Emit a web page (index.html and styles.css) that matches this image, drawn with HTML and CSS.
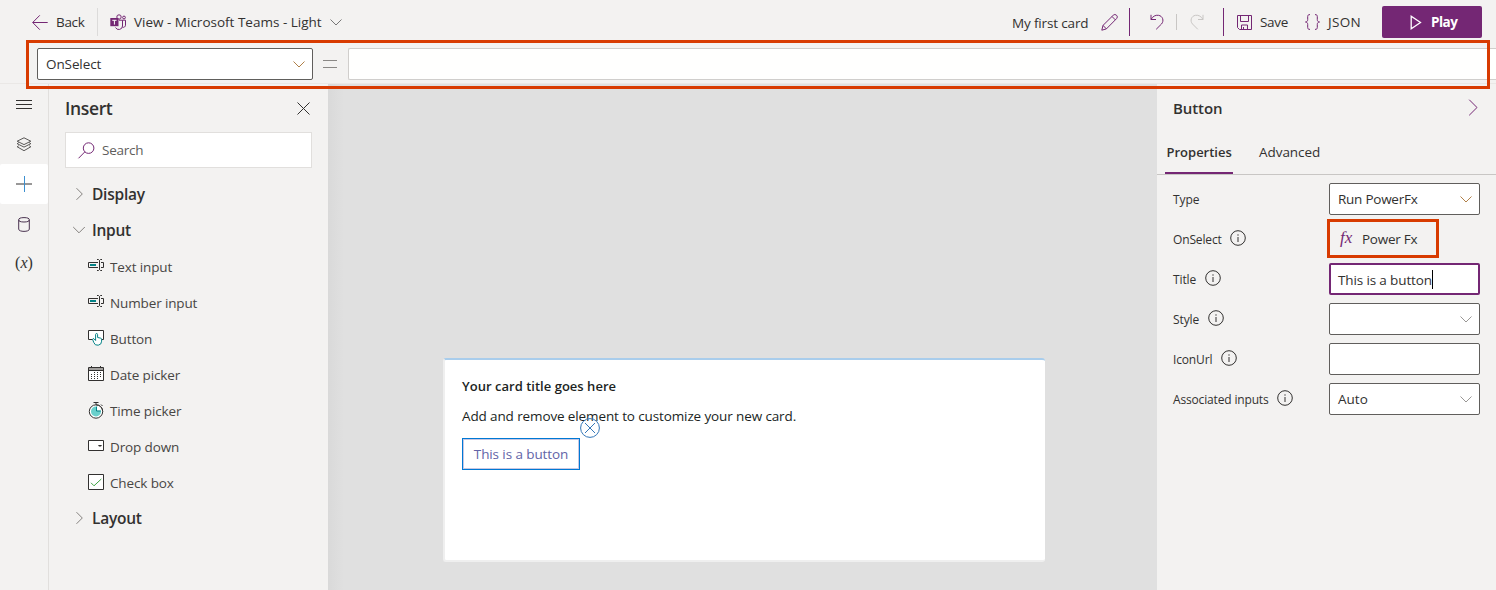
FILE: index.html
```html
<!DOCTYPE html>
<html lang="en">
<head>
<meta charset="utf-8">
<title>Card designer</title>
<link rel="stylesheet" href="styles.css">
</head>
<body>
<div class="app">
  <header class="commands">
    <svg class="i-back" width="16" height="16" viewBox="0 0 16 16"><path d="M15.700 8.500H.8M7.800 1.300.7 8.500l7.100 7.200"/></svg>
    <span class="t-back">Back</span>
    <i class="sep sep-light"></i>
    <svg class="i-teams" width="17" height="17" viewBox="0 0 17 17"><circle cx="9" cy="3" r="2.200"/><circle cx="14" cy="3.500" r="1.400"/><path d="M9 6.200h3.500v5.800a3.700 3.700 0 0 1-7 1.500M12.500 6.200h3v5a2.200 2.200 0 0 1-3 2"/><path class="solid" d="M.3 4h8.200v8.200H.3z"/><path class="letter" d="M2.300 6.300h4.200M4.400 6.300v4.300"/></svg>
    <span class="t-view">View - Microsoft Teams - Light</span>
    <svg class="chev i-view" width="12" height="7" viewBox="0 0 12 7"><path d="M.5.5 6 6 11.500.5"/></svg>
    <span class="t-card">My first card</span>
    <svg class="i-pencil" width="17" height="17" viewBox="0 0 17 17"><path d="M.8 16.200 2 11.400 12.200 1.300a2.200 2.200 0 0 1 3.400 3.300L5.400 14.900zM11 2.500l3.400 3.400M2 11.400l3.400 3.500"/></svg>
    <i class="sep sep-dark s1"></i>
    <svg class="i-undo" width="14" height="16" viewBox="0 0 14 16"><path d="M1 .8v4.700h5M1 5.500C2.500 2.500 5.500.8 8.500 1.300c4.300.7 5.800 5.500 3 8.700L6.200 15.300"/></svg>
    <i class="sep sep-short"></i>
    <svg class="i-redo" width="14" height="16" viewBox="0 0 14 16"><path d="M13 .8v4.700H8M13 5.500C11.500 2.500 8.500.8 5.500 1.300c-4.300.7-5.800 5.500-3 8.700l5.300 5.300"/></svg>
    <i class="sep sep-dark s2"></i>
    <svg class="i-save" width="15" height="15" viewBox="0 0 15 15"><path d="M.5.5h14v14H2.500l-2-2zM3.500.5v6h8v-6M4.500 14.500v-4.500h6v4.500M6.500 12v2.500"/></svg>
    <span class="t-save">Save</span>
    <svg class="i-json" width="15" height="16" viewBox="0 0 15 16"><path d="M5 .6C3 .6 2.700 1.400 2.700 2.600v3C2.700 7 2 7.900.5 8c1.500.1 2.200 1 2.200 2.400v3c0 1.200.3 2 2.300 2M10 .6c2 0 2.300.8 2.300 2v3c0 1.400.7 2.300 2.200 2.400-1.500.1-2.200 1-2.200 2.400v3c0 1.200-.3 2-2.300 2"/></svg>
    <span class="t-json">JSON</span>
    <button class="play"><svg width="12" height="15" viewBox="0 0 12 15"><path d="M1.200 1.200v12.600l9.300-6.300z"/></svg><span>Play</span></button>
  </header>

  <div class="formula">
    <div class="prop-select"><span>OnSelect</span><svg class="chev warm" width="12" height="7" viewBox="0 0 12 7"><path d="M.5.5 6 6 11.500.5"/></svg></div>
    <i class="equals"></i>
    <div class="expression"></div>
    <div class="highlight formula-mark"></div>
  </div>

  <main class="body">
    <nav class="rail">
      <div><svg width="16" height="10" viewBox="0 0 16 10"><path d="M0 1.500h16M0 5.500h16M0 9.500h16" /></svg></div>
      <div><svg class="layers" width="16" height="15" viewBox="0 0 16 15"><path d="M8 .8l6.800 3.400L8 7.600 1.200 4.200zM2.800 5.600 1.200 6.700 8 10.100l6.800-3.400-1.600-1.100M2.800 8.700l-1.600 1.100L8 13.700l6.800-3.900-1.600-1.100"/></svg></div>
      <div class="active"><svg width="16" height="16" viewBox="0 0 16 16"><path d="M0 8h16"/><path class="blue" d="M8.500 0v16"/></svg></div>
      <div><svg class="data" width="12" height="15" viewBox="0 0 12 15"><ellipse cx="6" cy="2.800" rx="5.300" ry="2.200"/><path d="M.7 2.800v9.400c0 2.900 10.600 2.900 10.600 0V2.800"/></svg></div>
      <div class="var">(<em>x</em>)</div>
    </nav>

    <aside class="insert">
      <div class="insert-head"><h2>Insert</h2><svg width="13" height="13" viewBox="0 0 13 13"><path d="M.5.500l12 12M12.500.500l-12 12"/></svg></div>
      <div class="search"><svg width="17" height="17" viewBox="0 0 17 17"><circle cx="10.600" cy="6.100" r="5.300"/><path d="M6.800 9.900.5 16.300"/></svg><span>Search</span></div>
      <div class="group"><svg class="chev" width="12" height="12" viewBox="0 0 12 12"><path d="M3.500.2 9.300 6l-5.800 5.800"/></svg><span>Display</span></div>
      <div class="group"><svg class="chev" width="12" height="12" viewBox="0 0 12 12"><path d="M.2 3 6 8.800 11.800 3"/></svg><span>Input</span></div>
      <div class="item"><svg width="16" height="16" viewBox="0 0 16 16"><path d="M10 4.500H.5v5H10M13 4.500h2.500v5H13M9 1.500h1.500l1 1 1-1H14M9 12.500h1.500l1-1 1 1H14M11.500 2.500v9"/><path class="teal-fill" d="M2 6h6v2H2z"/></svg><span>Text input</span></div>
      <div class="item"><svg width="16" height="16" viewBox="0 0 16 16"><path d="M10 4.500H.5v5H10M13 4.500h2.500v5H13M9 1.500h1.500l1 1 1-1H14M9 12.500h1.500l1-1 1 1H14M11.500 2.500v9"/><path class="teal-fill" d="M2 6h6v2H2z"/></svg><span>Number input</span></div>
      <div class="item"><svg width="16" height="16" viewBox="0 0 16 16"><path class="white" d="M.5.500h15v9H.5z"/><path class="hand" d="M7.600 9.800V4.600c0-1.500 2-1.500 2 0v2.900l2.900.6c.8.200 1.100.6 1.100 1.400v1.700a4 4 0 0 1-7.800 1.300L4.700 9.700c-.5-1 .8-1.500 1.400-.8l1.500 1.600z"/></svg><span>Button</span></div>
      <div class="item"><svg width="16" height="16" viewBox="0 0 16 16"><path class="white" d="M.5 1.500h15v13H.5z"/><path class="gray" d="M1 2h14v2.500H1z"/><path d="M.5 4.500h15M3.500 0v2M12.500 0v2"/><path class="dots" d="M6 6.500h8M3 8.500h11M3 10.500h11M3 12.500h8"/></svg><span>Date picker</span></div>
      <div class="item"><svg class="watch" width="16" height="17" viewBox="0 0 16 17"><circle class="white" cx="8" cy="9.500" r="6.700"/><circle class="clock" cx="8" cy="9.500" r="5"/><path class="white-fill" d="M9 4.500h3.800v4.200H9z"/><path d="M5.500.5h5M8 .5v2M13 2.500l1.500 1.500"/><path class="arc" d="M8.500 4.700V9h4.300"/><path d="M8 2.800a6.700 6.700 0 0 1 6.700 6.700"/></svg><span>Time picker</span></div>
      <div class="item"><svg width="16" height="16" viewBox="0 0 16 16"><path class="white" d="M.5 2.500h15v10H.5z"/><path class="dark-fill" d="M10 7h4l-1 1.500h-2z"/></svg><span>Drop down</span></div>
      <div class="item"><svg width="16" height="16" viewBox="0 0 16 16"><path class="white" d="M.5.500h15v15H.5z"/><path class="green" d="m3 8.800 3 3L13.300 5"/></svg><span>Check box</span></div>
      <div class="group"><svg class="chev" width="12" height="12" viewBox="0 0 12 12"><path d="M3.500.2 9.300 6l-5.800 5.800"/></svg><span>Layout</span></div>
    </aside>

    <section class="canvas">
      <article class="card">
        <h3>Your card title goes here</h3>
        <p>Add and remove element to customize your new card.</p>
        <div class="selected"><span>This is a button</span>
          <svg class="remove" width="20" height="20" viewBox="0 0 20 20"><circle cx="10" cy="10" r="9.400"/><path d="m5 5 10 10M15 5 5 15"/></svg>
        </div>
      </article>
    </section>

    <aside class="props">
      <div class="props-head"><h2>Button</h2><svg width="10" height="17" viewBox="0 0 10 17"><path d="M1.200.700 9 8.500l-7.800 7.800"/></svg></div>
      <div class="tabs"><span class="tab on">Properties</span><span class="tab adv">Advanced</span></div>
      <div class="row"><label>Type</label><div class="field"><span>Run PowerFx</span><svg class="chev warm" width="12" height="7" viewBox="0 0 12 7"><path d="M.5.5 6 6 11.500.5"/></svg></div></div>
      <div class="row"><label class="l-on">OnSelect</label><svg class="info" width="16" height="16" viewBox="0 0 16 16"><circle cx="8" cy="8" r="7.300"/><path d="M8 7v5M8 4.300v1.400"/></svg><div class="fx"><i>fx</i><span>Power Fx</span><div class="highlight fx-mark"></div></div></div>
      <div class="row"><label class="l-title">Title</label><svg class="info" width="16" height="16" viewBox="0 0 16 16"><circle cx="8" cy="8" r="7.300"/><path d="M8 7v5M8 4.300v1.400"/></svg><div class="field focus"><span>This is a button</span><i class="caret"></i></div></div>
      <div class="row"><label class="l-style">Style</label><svg class="info" width="16" height="16" viewBox="0 0 16 16"><circle cx="8" cy="8" r="7.300"/><path d="M8 7v5M8 4.300v1.400"/></svg><div class="field"><svg class="chev muted" width="12" height="7" viewBox="0 0 12 7"><path d="M.5.5 6 6 11.500.5"/></svg></div></div>
      <div class="row"><label class="l-icon">IconUrl</label><svg class="info" width="16" height="16" viewBox="0 0 16 16"><circle cx="8" cy="8" r="7.300"/><path d="M8 7v5M8 4.300v1.400"/></svg><div class="field"></div></div>
      <div class="row"><label class="l-assoc">Associated inputs</label><svg class="info" width="16" height="16" viewBox="0 0 16 16"><circle cx="8" cy="8" r="7.300"/><path d="M8 7v5M8 4.300v1.400"/></svg><div class="field"><span class="f-auto">Auto</span><svg class="chev muted" width="12" height="7" viewBox="0 0 12 7"><path d="M.5.5 6 6 11.500.5"/></svg></div></div>
    </aside>
  </main>
</div>
</body>
</html>
```
FILE: styles.css
```css
* { box-sizing: border-box; }
body {
  margin: 0;
  font: 13.5px/20px "Open Sans", "Noto Sans", sans-serif;
  color: #323130;
  background: #f3f2f1;
}
h2, h3, p { margin: 0; }
svg { display: block; flex: none; fill: none; stroke: #323130; stroke-width: 1; overflow: visible; }
span, label { flex: none; white-space: nowrap; }
.chev { stroke: #85827f; }
.chev.warm { stroke: #b08048; }
.chev.muted { stroke: #999795; }
.app { width: 1496px; height: 590px; display: flex; flex-direction: column; overflow: hidden; }

/* Command bar */
.commands { height: 44px; flex: none; display: flex; align-items: center; padding-left: 32px; }
.commands svg { stroke: #742774; }
.t-back { width: 41px; margin-left: 8px; letter-spacing: -.3px; }
.sep { width: 1px; height: 28px; flex: none; }
.sep-light { background: #dcdbda; }
.i-teams { margin-left: 12px; }
.i-teams .solid { fill: #742774; stroke: none; }
.commands .i-teams .letter { stroke: #fff; }
.t-view { width: 189px; margin-left: 7px; letter-spacing: 0; }
.commands .i-view { margin-left: 7px; stroke: #777; }
.t-card { width: 78px; margin: 2px 0 0 670px; letter-spacing: -.15px; }
.i-pencil { margin-left: 11px; }
.sep-dark { background: #742774; }
.s1 { margin-left: 11px; }
.i-undo { margin-left: 20px; }
.sep-short { height: 16px; margin-left: 12px; background: #c8c6c4; }
.commands .i-redo { margin-left: 13px; stroke: #c8c6c4; }
.s2 { margin-left: 19px; }
.i-save { margin-left: 13px; }
.t-save { width: 29px; margin-left: 8px; letter-spacing: -.3px; }
.i-json { margin-left: 16px; }
.t-json { width: 34px; margin-left: 8px; letter-spacing: .3px; }
.play {
  width: 100px; height: 32px; margin-left: 20px; padding: 0 0 0 28px;
  display: flex; align-items: center; gap: 9px;
  border: 0; border-radius: 2px; background: #742774; color: #fff;
  font: 700 13.5px/20px "Open Sans", sans-serif; letter-spacing: -.5px;
}
.commands .play svg { stroke: #fff; stroke-width: 1.300; }

/* Formula bar */
.formula { position: relative; height: 40px; flex: none; display: flex; padding: 4px 0 0 37px; border-bottom: 1px solid #eae8e6; }
.prop-select {
  width: 276px; height: 32px; flex: none; display: flex; align-items: center; justify-content: space-between;
  padding: 0 7px 0 8px; border: 1px solid #605e5c; border-radius: 2px; background: #fff; letter-spacing: -.1px;
}
.equals { width: 14px; height: 8px; margin: 12px 11px 0 10px; border: solid #8a8886; border-width: 1px 0; flex: none; }
.expression { flex: 1; height: 32px; border: 1px solid #d0cecc; border-right: 0; border-radius: 2px 0 0 2px; background: #fffffe; }
.highlight { position: absolute; border: 3px solid #d83b01; pointer-events: none; }
.formula-mark { left: 26px; top: -4px; width: 1464px; height: 49px; z-index: 2; }

.body { flex: 1; display: flex; min-height: 0; }

/* Left rail */
.rail { width: 49px; flex: none; border-right: 1px solid #e1dfdd; }
.rail div { height: 40px; display: flex; align-items: center; justify-content: center; }
.rail .active { background: #fff; border-radius: 2px; }
.rail .blue { stroke: #3b8fd0; }
.rail .layers { stroke-width: .8; }
.rail .data { stroke: #4a3350; }
.rail .var { height: 38px; font: 16px/20px "Liberation Serif", serif; }

/* Insert pane */
.insert { width: 279px; flex: none; padding: 0 16px; }
.insert-head { height: 48px; display: flex; align-items: center; justify-content: space-between; padding-right: 2px; }
.insert-head h2 { font-size: 17.5px; font-weight: 600; line-height: 24px; letter-spacing: -.35px; }
.search {
  width: 247px; height: 36px; display: flex; align-items: center; gap: 7px; padding-left: 12px; margin-bottom: 8px;
  background: #fff; border: 1px solid #e1dfdd; color: #605e5c; letter-spacing: -.25px;
}
.search svg { stroke: #742774; }
.group { height: 36px; display: flex; align-items: center; gap: 7px; padding-left: 8px; font-size: 15.500px; font-weight: 600; letter-spacing: -.25px; }
.item { height: 36px; display: flex; align-items: center; gap: 6px; padding: 1px 0 0 23px; color: #484644; letter-spacing: -.13px; }
.item .white { fill: #fff; }
.item .white-fill { fill: #fff; stroke: none; }
.item .teal-fill { fill: #038387; stroke: none; }
.item .hand { fill: #fff; stroke: #038387; }
.item .gray { fill: #a19f9d; stroke: none; }
.item .dots { stroke-dasharray: 1 2; }
.item .clock { fill: #69d0cc; stroke: none; }
.item .arc { stroke: #038387; }
.item .dark-fill { fill: #323130; stroke: none; }
.item .green { stroke: #40a544; }
.item svg { margin-top: -.5px; }
.item .watch { margin-top: -1px; }

/* Card canvas */
.canvas { width: 829px; flex: none; padding: 274px 0 0 115px; background: linear-gradient(90deg, #d9d9d9, #e0e0e0 16px); }
.card {
  width: 602px; height: 204px; padding: 16px 17px 0; background: #fff; color: #201f1e;
  border: solid #efefef; border-top-color: #a9cdec; border-width: 2px 0 2px 2px; border-radius: 3px;
}
.card h3 { font-size: 13px; font-weight: 600; line-height: 20px; letter-spacing: .02px; }
.card p { margin-top: 10px; letter-spacing: -.12px; }
.selected {
  position: relative; width: 118px; height: 32px; margin-top: 12px; display: flex; align-items: center; justify-content: center;
  border: 1px solid #0078d4; box-shadow: inset 0 0 0 1px #c7c7e3; color: #6264a7; letter-spacing: -.1px;
}
.remove { position: absolute; left: 117px; top: -21px; stroke: #3577b8; }

/* Properties pane */
.props { width: 339px; flex: none; }
.props-head { height: 48px; display: flex; align-items: center; justify-content: space-between; padding: 0 18px 0 16px; }
.props-head h2 { font-size: 15px; font-weight: 600; letter-spacing: -.1px; }
.props-head svg { stroke: #742774; margin-top: -2px; }
.tabs { height: 43px; display: flex; border-bottom: 1px solid #c8c6c4; padding-left: 8px; margin-bottom: 4px; }
.tab { height: 42px; line-height: 41px; }
.on { width: 68px; padding-left: 1.5px; border-bottom: 2px solid #742774; font-weight: 600; font-size: 13px; }
.adv { margin-left: 26px; letter-spacing: -.05px; }
.row { height: 40px; display: flex; align-items: center; padding: 0 16px; font-size: 12px; }
.row label { margin-top: 2px; font-weight: 500; letter-spacing: -.1px; }
.row .l-on { width: 49px; letter-spacing: -.15px; }
.row .l-title { width: 24px; }
.row .l-style { width: 27px; }
.row .l-icon { width: 40px; letter-spacing: -.15px; }
.row .l-assoc { width: 96px; letter-spacing: -.16px; }
.row .info { margin: -2px 0 0 8px; }
.row .field { margin-left: auto; }
.field {
  width: 151px; height: 32px; display: flex; align-items: center; padding: 0 7px 0 8px;
  background: #fff; border: 1px solid #605e5c; border-radius: 2px; font-size: 13.500px; letter-spacing: -.25px;
}
.field .chev { margin-left: auto; }
.field .f-auto { letter-spacing: 0; }
.focus { border: 2px solid #742774; padding: 1px 7px 0; letter-spacing: -.13px; }
.caret { width: 1px; height: 19px; background: #000; }
.fx { position: relative; width: 151px; height: 32px; margin-left: auto; display: flex; align-items: center; padding-left: 11px; font-size: 13.500px; letter-spacing: -.25px; }
.fx i { width: 22px; margin-top: -2px; font: italic 17px/20px "Liberation Serif", serif; color: #742774; letter-spacing: 0; }
.fx-mark { left: -2px; top: -4px; width: 112px; height: 39px; }
```
